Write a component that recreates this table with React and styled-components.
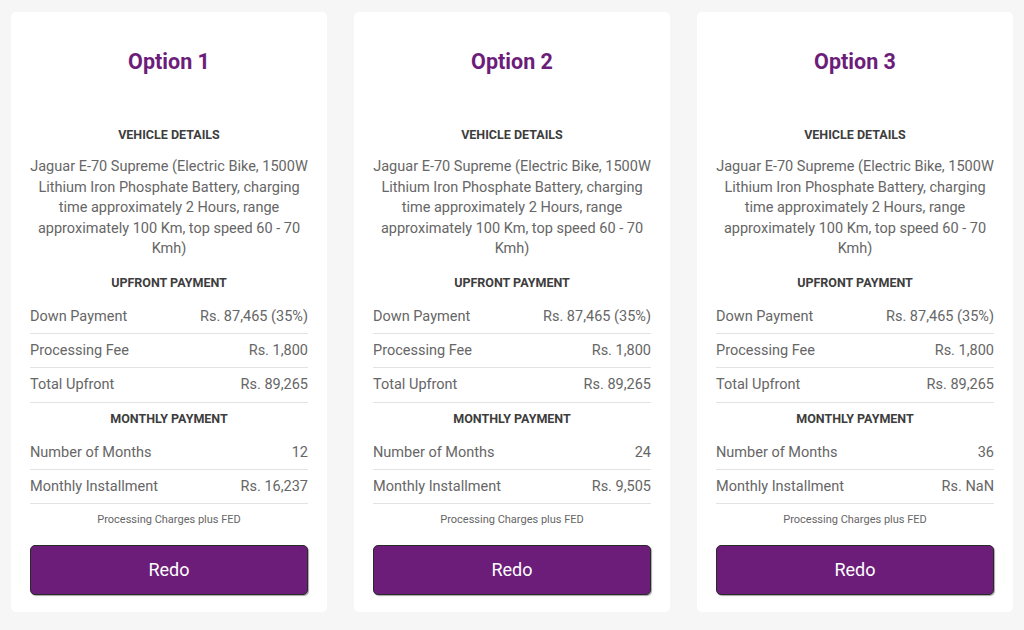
import React from 'react'
import styled, { createGlobalStyle } from 'styled-components'

const GlobalStyle = createGlobalStyle`
    html, body {
        margin: 0;
        padding: 0;
        background: #f6f6f6;
        font-family: Roboto, "Liberation Sans", Arial, sans-serif;
    }
`

const Page = styled.div`
    display: grid;
    grid-template-columns: repeat(3, 316px);
    column-gap: 27px;
    padding: 12px 12px 18px 11px;
    background: #f6f6f6;
`

const Card = styled.div`
    background: #fff;
    border-radius: 5px;
    padding: 37px 19px 17px;
    display: flex;
    flex-direction: column;
`

const Title = styled.h2`
    margin: 0 0 44px;
    font-size: 21.5px;
    line-height: 26px;
    font-weight: 700;
    color: #6c1d7a;
    text-align: center;
`

const Heading = styled.div`
    padding: 8px 0 9px;
    font-size: 12.5px;
    line-height: 16px;
    font-weight: 700;
    color: #3d3d3d;
    text-align: center;
    text-transform: uppercase;
`

const Description = styled.p`
    margin: 5px 0 7px;
    font-size: 14.5px;
    line-height: 20.6px;
    color: #666;
    text-align: center;
`

const Row = styled.div`
    display: flex;
    justify-content: space-between;
    align-items: center;
    height: 33.2px;
    border-bottom: 1px solid #e3e3e3;
    font-size: 14.5px;
    color: #666;
`

const Note = styled.div`
    margin: 8px 0 0;
    font-size: 11px;
    line-height: 15px;
    color: #666;
    text-align: center;
`

const Button = styled.button`
    margin-top: 18px;
    height: 50px;
    width: 100%;
    border: 1px solid #2a2a2a;
    border-radius: 5px;
    background: #6c1d7a;
    box-shadow: 1px 1px 1px rgba(0, 0, 0, 0.35);
    color: #fff;
    font-family: Roboto, "Liberation Sans", Arial, sans-serif;
    font-size: 18px;
    cursor: pointer;
`

const vehicle = 'Jaguar E-70 Supreme (Electric Bike, 1500W Lithium Iron Phosphate Battery, charging time approximately 2 Hours, range approximately 100 Km, top speed 60 - 70 Kmh)'

const options = [
    { months: 12, installment: 'Rs. 16,237' },
    { months: 24, installment: 'Rs. 9,505' },
    { months: 36, installment: 'Rs. NaN' },
]

const OptionCard = ({ index, months, installment }) => (
    <Card>
        <Title>Option {index}</Title>
        <Heading>Vehicle Details</Heading>
        <Description>{vehicle}</Description>
        <Heading>Upfront Payment</Heading>
        <Row><span>Down Payment</span><span>Rs. 87,465 (35%)</span></Row>
        <Row><span>Processing Fee</span><span>Rs. 1,800</span></Row>
        <Row><span>Total Upfront</span><span>Rs. 89,265</span></Row>
        <Heading>Monthly Payment</Heading>
        <Row><span>Number of Months</span><span>{months}</span></Row>
        <Row><span>Monthly Installment</span><span>{installment}</span></Row>
        <Note>Processing Charges plus FED</Note>
        <Button>Redo</Button>
    </Card>
)

const App = () => (
    <>
        <GlobalStyle />
        <Page>
            {options.map((o, i) => (
                <OptionCard key={i} index={i + 1} {...o} />
            ))}
        </Page>
    </>
)

export default App
